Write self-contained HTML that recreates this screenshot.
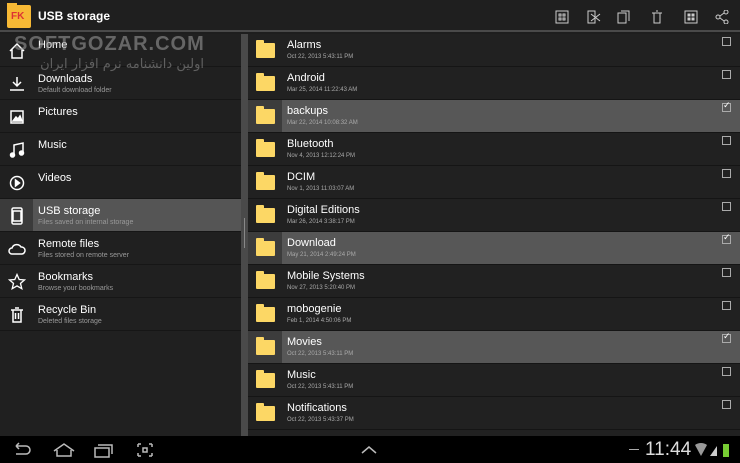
<!DOCTYPE html>
<html><head><meta charset="utf-8"><style>
*{margin:0;padding:0;box-sizing:border-box}
body{width:740px;height:463px;overflow:hidden;background:#1e1e1e;font-family:"Liberation Sans",sans-serif;color:#fff;position:relative}
.top{position:absolute;left:0;top:0;width:740px;height:32px;background:#1f1f1f;border-bottom:2px solid #4a4a4a}
.title{position:absolute;left:38px;top:9px;font-size:12px;font-weight:bold}
.left{position:absolute;left:0;top:34px;width:241px;height:402px;background:#202020}
.li{position:absolute;left:0;width:241px;height:33px;border-bottom:1px solid #161616}
.li .t{position:absolute;left:38px;top:6px;font-size:11px}
.li .s{position:absolute;left:38px;top:20px;font-size:7px;color:#999}
.li.sel{background:#555}
.li.sel .ic{position:absolute;left:0;top:0;width:33px;height:32px;background:#3b3b3b}
.li svg{position:absolute;left:8px;top:8px}
.div{position:absolute;left:241px;top:34px;width:7px;height:402px;background:#4a4a4a}
.right{position:absolute;left:248px;top:34px;width:492px;height:402px;background:#212121}
.ri{position:absolute;left:0;width:492px;height:33px;border-bottom:1px solid #151515}
.ri.sel{background:#575757}
.ri.sel .ic{position:absolute;left:0;top:0;width:34px;height:32px;background:#3c3c3c}
.ri .f{position:absolute;left:8px;top:9px;width:19px;height:15px;background:#fcd765;border-radius:1px}
.ri .f:before{content:"";position:absolute;left:0;top:-3px;width:8px;height:4px;background:#fcd765;border-radius:1px 1px 0 0}
.ri .t{position:absolute;left:39px;top:5px;font-size:11px}
.ri .s{position:absolute;left:39px;top:20px;font-size:6px;color:#aaa}
.cb{position:absolute;left:474px;top:3px;width:9px;height:9px;border:1px solid #aaa}
.cb.on:after{content:"✓";position:absolute;left:0;top:-4px;font-size:9px;color:#fff}
.bot{position:absolute;left:0;top:436px;width:740px;height:27px;background:#000}
.wm{position:absolute;left:14px;top:33px;font-size:20px;font-weight:bold;color:rgba(150,150,150,.6);letter-spacing:1px}
.wm2{position:absolute;left:14px;top:57px;font-size:13px;color:rgba(150,150,150,.55);font-family:"DejaVu Sans",sans-serif}
</style></head><body>
<div class="top">
<div style="position:absolute;left:7px;top:5px;width:24px;height:23px;background:#f7b935;border-radius:2px"><div style="position:absolute;left:0;top:-2px;width:10px;height:4px;background:#f7b935"></div><span style="position:absolute;left:4px;top:6px;font-size:10px;font-weight:bold;color:#d33">FK</span></div>
<div class="title">USB storage</div>
<svg style="position:absolute;left:555px;top:10px" width="175" height="14" fill="none" stroke="#ccc" stroke-width="1">
<rect x="1" y="1" width="12" height="12"/><rect x="4" y="4" width="2" height="2"/><rect x="8" y="4" width="2" height="2"/><rect x="4" y="8" width="2" height="2"/><rect x="8" y="8" width="2" height="2"/>
<path d="M33 1h7v12h-7zM36 4l9 7M36 11l9-7"/>
<path d="M63 3h8v10h-8zM66 1h8v10"/>
<path d="M97 3h10M99 3v10h6V3M101 1h2"/>
<rect x="130" y="1" width="12" height="12"/><rect x="133" y="4" width="2" height="2" fill="#ccc"/><rect x="137" y="4" width="2" height="2" fill="#ccc"/><rect x="133" y="8" width="2" height="2" fill="#ccc"/><rect x="137" y="8" width="2" height="2" fill="#ccc"/>
<circle cx="163" cy="7" r="2"/><circle cx="171" cy="2" r="2"/><circle cx="171" cy="12" r="2"/><path d="M165 6l4-3M165 8l4 3"/>
</svg>
</div>
<div class="left">
<div class="li" style="top:0"><svg width="18" height="18" fill="none" stroke="#fff" stroke-width="1.5"><path d="M2 9L9 2l7 7M4 7v9h10V7"/></svg><div class="t" style="top:5px">Home</div></div>
<div class="li" style="top:33px"><svg width="18" height="18" fill="none" stroke="#fff" stroke-width="1.5"><path d="M9 2v9M5 7l4 4 4-4M2 15h14"/></svg><div class="t">Downloads</div><div class="s">Default download folder</div></div>
<div class="li" style="top:66px"><svg width="18" height="18" fill="none" stroke="#fff" stroke-width="1.5"><rect x="3" y="3" width="12" height="12"/><path d="M5 13l3-4 2 2 2-3 2 5z" fill="#fff"/></svg><div class="t">Pictures</div></div>
<div class="li" style="top:99px"><svg width="18" height="18" fill="none" stroke="#fff" stroke-width="1.5"><path d="M6 14V4l9-2v10"/><circle cx="4.5" cy="14" r="2" fill="#fff"/><circle cx="13.5" cy="12" r="2" fill="#fff"/></svg><div class="t">Music</div></div>
<div class="li" style="top:132px"><svg width="18" height="18" fill="none" stroke="#fff" stroke-width="1.5"><circle cx="9" cy="9" r="6.5"/><path d="M7.5 6l4 3-4 3z" fill="#fff"/></svg><div class="t">Videos</div></div>
<div class="li sel" style="top:165px"><div class="ic"></div><svg width="18" height="18" fill="none" stroke="#fff" stroke-width="1.5"><rect x="4" y="1" width="10" height="16" rx="1.5"/><path d="M5 4h8v10H5z"/></svg><div class="t">USB storage</div><div class="s">Files saved on internal storage</div></div>
<div class="li" style="top:198px"><svg width="18" height="18" fill="none" stroke="#fff" stroke-width="1.5"><path d="M4 14a3 3 0 010-6 5 5 0 019-1 3.5 3.5 0 011 7z"/></svg><div class="t">Remote files</div><div class="s">Files stored on remote server</div></div>
<div class="li" style="top:231px"><svg width="18" height="18" fill="none" stroke="#fff" stroke-width="1.3"><path d="M9 1.5l2.2 5 5.3.4-4 3.5 1.3 5.3L9 12.9l-4.8 2.8 1.3-5.3-4-3.5 5.3-.4z"/></svg><div class="t">Bookmarks</div><div class="s">Browse your bookmarks</div></div>
<div class="li" style="top:264px"><svg width="18" height="18" fill="none" stroke="#fff" stroke-width="1.5"><path d="M3 4h12M5 4v12h8V4M7 2h4M7.5 7v6M10.5 7v6"/></svg><div class="t">Recycle Bin</div><div class="s">Deleted files storage</div></div>
</div>
<div class="div"><div style="position:absolute;left:3px;top:184px;width:1px;height:30px;background:#888"></div></div>
<div class="right">
<div class="ri" style="top:0"><div class="f"></div><div class="t">Alarms</div><div class="s">Oct 22, 2013 5:43:11 PM</div><div class="cb"></div></div>
<div class="ri" style="top:33px"><div class="f"></div><div class="t">Android</div><div class="s">Mar 25, 2014 11:22:43 AM</div><div class="cb"></div></div>
<div class="ri sel" style="top:66px"><div class="ic"></div><div class="f"></div><div class="t">backups</div><div class="s">Mar 22, 2014 10:08:32 AM</div><div class="cb on"></div></div>
<div class="ri" style="top:99px"><div class="f"></div><div class="t">Bluetooth</div><div class="s">Nov 4, 2013 12:12:24 PM</div><div class="cb"></div></div>
<div class="ri" style="top:132px"><div class="f"></div><div class="t">DCIM</div><div class="s">Nov 1, 2013 11:03:07 AM</div><div class="cb"></div></div>
<div class="ri" style="top:165px"><div class="f"></div><div class="t">Digital Editions</div><div class="s">Mar 26, 2014 3:38:17 PM</div><div class="cb"></div></div>
<div class="ri sel" style="top:198px"><div class="ic"></div><div class="f"></div><div class="t">Download</div><div class="s">May 21, 2014 2:49:24 PM</div><div class="cb on"></div></div>
<div class="ri" style="top:231px"><div class="f"></div><div class="t">Mobile Systems</div><div class="s">Nov 27, 2013 5:20:40 PM</div><div class="cb"></div></div>
<div class="ri" style="top:264px"><div class="f"></div><div class="t">mobogenie</div><div class="s">Feb 1, 2014 4:50:06 PM</div><div class="cb"></div></div>
<div class="ri sel" style="top:297px"><div class="ic"></div><div class="f"></div><div class="t">Movies</div><div class="s">Oct 22, 2013 5:43:11 PM</div><div class="cb on"></div></div>
<div class="ri" style="top:330px"><div class="f"></div><div class="t">Music</div><div class="s">Oct 22, 2013 5:43:11 PM</div><div class="cb"></div></div>
<div class="ri" style="top:363px"><div class="f"></div><div class="t">Notifications</div><div class="s">Oct 22, 2013 5:43:37 PM</div><div class="cb"></div></div>
</div>
<div class="wm">SOFTGOZAR.COM</div>
<div class="wm2" dir="rtl" style="width:190px">اولین دانشنامه نرم افزار ایران</div>
<div class="bot">
<svg style="position:absolute;left:12px;top:6px" width="170" height="16" fill="none" stroke="#bbb" stroke-width="1.5">
<path d="M4 4h10a4 4 0 010 8H4M4 4l3-3M4 4l3 3"/>
<path d="M42 9l10-7 10 7M45 8v6h14V8"/>
<path d="M83 6h14v9H83zM86 3h14v9"/>
<path d="M126 2h3M126 2v3M140 2h-3M140 2v3M126 14h3M126 14v-3M140 14h-3M140 14v-3M131 6h4v4h-4z"/>
</svg>
<svg style="position:absolute;left:360px;top:9px" width="18" height="10" fill="none" stroke="#bbb" stroke-width="1.5"><path d="M2 8l7-6 7 6"/></svg>
<div style="position:absolute;left:629px;top:13px;width:10px;height:1px;background:#aaa"></div>
<div style="position:absolute;left:645px;top:3px;font-size:19px;color:#ddd">11:44</div>
<svg style="position:absolute;left:694px;top:6px" width="46" height="16"><path d="M1 3a10 10 0 0112 0L7 14z" fill="#999"/><path d="M16 14l7-10v10z" fill="#ccc"/><rect x="29" y="2" width="6" height="13" fill="#7c3"/></svg>
</div>
</body></html>
